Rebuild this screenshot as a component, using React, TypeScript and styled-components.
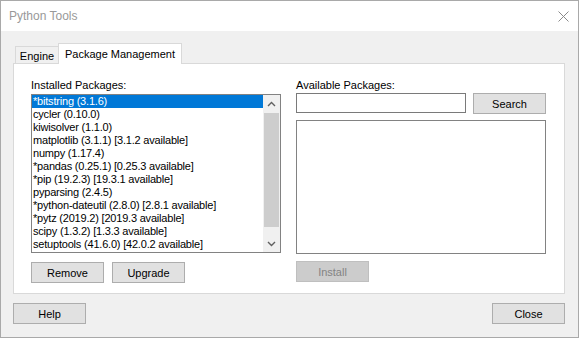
import React from 'react';
import styled, { createGlobalStyle } from 'styled-components';

const GlobalStyle = createGlobalStyle`
  html, body {
    margin: 0;
    padding: 0;
    background: #ffffff;
  }
  body {
    font-family: 'Liberation Sans', Arial, sans-serif;
    font-size: 11px;
    color: #000;
  }
  * {
    box-sizing: border-box;
  }
`;

const Window = styled.div`
  width: 579px;
  height: 338px;
  border: 1px solid #a9a9a9;
  background: #f0f0f0;
  display: flex;
  flex-direction: column;
`;

const TitleBar = styled.div`
  height: 30px;
  flex-shrink: 0;
  background: #ffffff;
  display: flex;
  align-items: center;
  justify-content: space-between;
  padding: 0 9px 0 8px;
`;

const Title = styled.span`
  color: #999999;
  font-size: 12px;
`;

const Body = styled.div`
  flex: 1;
  display: flex;
  flex-direction: column;
  padding: 12px 13px 13px 12px;
`;

const TabStrip = styled.div`
  height: 20px;
  display: flex;
  align-items: flex-end;
  padding-left: 2px;
`;

const Tab = styled.div<{ $active?: boolean }>`
  position: relative;
  display: flex;
  align-items: center;
  justify-content: center;
  border: 1px solid #d9d9d9;
  border-bottom: none;
  background: ${(p) => (p.$active ? '#ffffff' : '#f0f0f0')};
  height: ${(p) => (p.$active ? '21px' : '17px')};
  width: ${(p) => (p.$active ? '124px' : '44px')};
  margin-bottom: ${(p) => (p.$active ? '-1px' : '0')};
  margin-left: ${(p) => (p.$active ? '-1px' : '0')};
  z-index: ${(p) => (p.$active ? 1 : 0)};
  padding-top: ${(p) => (p.$active ? '0' : '1px')};
`;

const Panel = styled.div`
  height: 231px;
  flex-shrink: 0;
  background: #ffffff;
  border: 1px solid #d9d9d9;
  padding: 15px 17px 10px 17px;
  display: grid;
  grid-template-columns: 250px 250px;
  column-gap: 15px;
`;

const Column = styled.div`
  display: flex;
  flex-direction: column;
`;

const Label = styled.div<{ $gap: number }>`
  height: 13px;
  line-height: 13px;
  margin-bottom: ${(p) => p.$gap}px;
`;

const ListBox = styled.div`
  height: 159px;
  border: 1px solid #828282;
  display: flex;
`;

const Items = styled.div`
  flex: 1;
  overflow: hidden;
`;

const Item = styled.div<{ $selected?: boolean }>`
  height: 13px;
  line-height: 13px;
  padding-left: 1px;
  letter-spacing: -0.2px;
  white-space: nowrap;
  background: ${(p) => (p.$selected ? '#0078d7' : 'transparent')};
  color: ${(p) => (p.$selected ? '#ffffff' : '#000000')};
`;

const ScrollBar = styled.div`
  width: 17px;
  background: #f0f0f0;
  display: flex;
  flex-direction: column;
`;

const ScrollArrow = styled.div`
  height: 17px;
  display: flex;
  align-items: center;
  justify-content: center;
`;

const Track = styled.div`
  flex: 1;
  padding: 1px 1px 0 1px;
`;

const Thumb = styled.div`
  height: 114px;
  background: #cdcdcd;
`;

const ButtonRow = styled.div<{ $top: number }>`
  display: flex;
  gap: 8px;
  margin-top: ${(p) => p.$top}px;
`;

const Button = styled.button<{ $disabled?: boolean }>`
  width: 73px;
  height: 21px;
  padding: 0;
  font-family: 'Liberation Sans', Arial, sans-serif;
  font-size: 11px;
  background: ${(p) => (p.$disabled ? '#cccccc' : '#e1e1e1')};
  border: 1px solid ${(p) => (p.$disabled ? '#bfbfbf' : '#adadad')};
  color: ${(p) => (p.$disabled ? '#838383' : '#000000')};
  border-radius: 0;
`;

const SearchRow = styled.div`
  display: flex;
  gap: 7px;
  align-items: flex-start;
`;

const SearchInput = styled.div`
  width: 170px;
  height: 20px;
  border: 1px solid #7a7a7a;
  background: #ffffff;
`;

const AvailableList = styled.div`
  height: 134px;
  margin-top: 6px;
  border: 1px solid #828282;
  background: #ffffff;
`;

const Footer = styled.div`
  margin-top: 9px;
  display: flex;
  justify-content: space-between;
`;

const packages = [
  '*bitstring (3.1.6)',
  'cycler (0.10.0)',
  'kiwisolver (1.1.0)',
  'matplotlib (3.1.1) [3.1.2 available]',
  'numpy (1.17.4)',
  '*pandas (0.25.1) [0.25.3 available]',
  '*pip (19.2.3) [19.3.1 available]',
  'pyparsing (2.4.5)',
  '*python-dateutil (2.8.0) [2.8.1 available]',
  '*pytz (2019.2) [2019.3 available]',
  'scipy (1.3.2) [1.3.3 available]',
  'setuptools (41.6.0) [42.0.2 available]',
];

const Chevron = ({ up }: { up?: boolean }) => (
  <svg width="9" height="6" viewBox="0 0 9 6">
    <polyline
      points={up ? '1,5 4.5,1.5 8,5' : '1,1 4.5,4.5 8,1'}
      fill="none"
      stroke="#606060"
      strokeWidth="1.4"
    />
  </svg>
);

const CloseIcon = () => (
  <svg width="11" height="11" viewBox="0 0 11 11">
    <path d="M0.5 0.5 L10.5 10.5 M10.5 0.5 L0.5 10.5" stroke="#8a8a8a" strokeWidth="1" />
  </svg>
);

const App = () => {
  return (
    <>
      <GlobalStyle />
      <Window>
        <TitleBar>
          <Title>Python Tools</Title>
          <CloseIcon />
        </TitleBar>
        <Body>
          <TabStrip>
            <Tab>Engine</Tab>
            <Tab $active>Package Management</Tab>
          </TabStrip>
          <Panel>
            <Column>
              <Label $gap={2}>Installed Packages:</Label>
              <ListBox>
                <Items>
                  {packages.map((p, i) => (
                    <Item key={p} $selected={i === 0}>
                      {p}
                    </Item>
                  ))}
                </Items>
                <ScrollBar>
                  <ScrollArrow>
                    <Chevron up />
                  </ScrollArrow>
                  <Track>
                    <Thumb />
                  </Track>
                  <ScrollArrow>
                    <Chevron />
                  </ScrollArrow>
                </ScrollBar>
              </ListBox>
              <ButtonRow $top={9}>
                <Button>Remove</Button>
                <Button>Upgrade</Button>
              </ButtonRow>
            </Column>
            <Column>
              <Label $gap={1}>Available Packages:</Label>
              <SearchRow>
                <SearchInput />
                <Button>Search</Button>
              </SearchRow>
              <AvailableList />
              <ButtonRow $top={7}>
                <Button $disabled>Install</Button>
              </ButtonRow>
            </Column>
          </Panel>
          <Footer>
            <Button>Help</Button>
            <Button>Close</Button>
          </Footer>
        </Body>
      </Window>
    </>
  );
};

export default App;
